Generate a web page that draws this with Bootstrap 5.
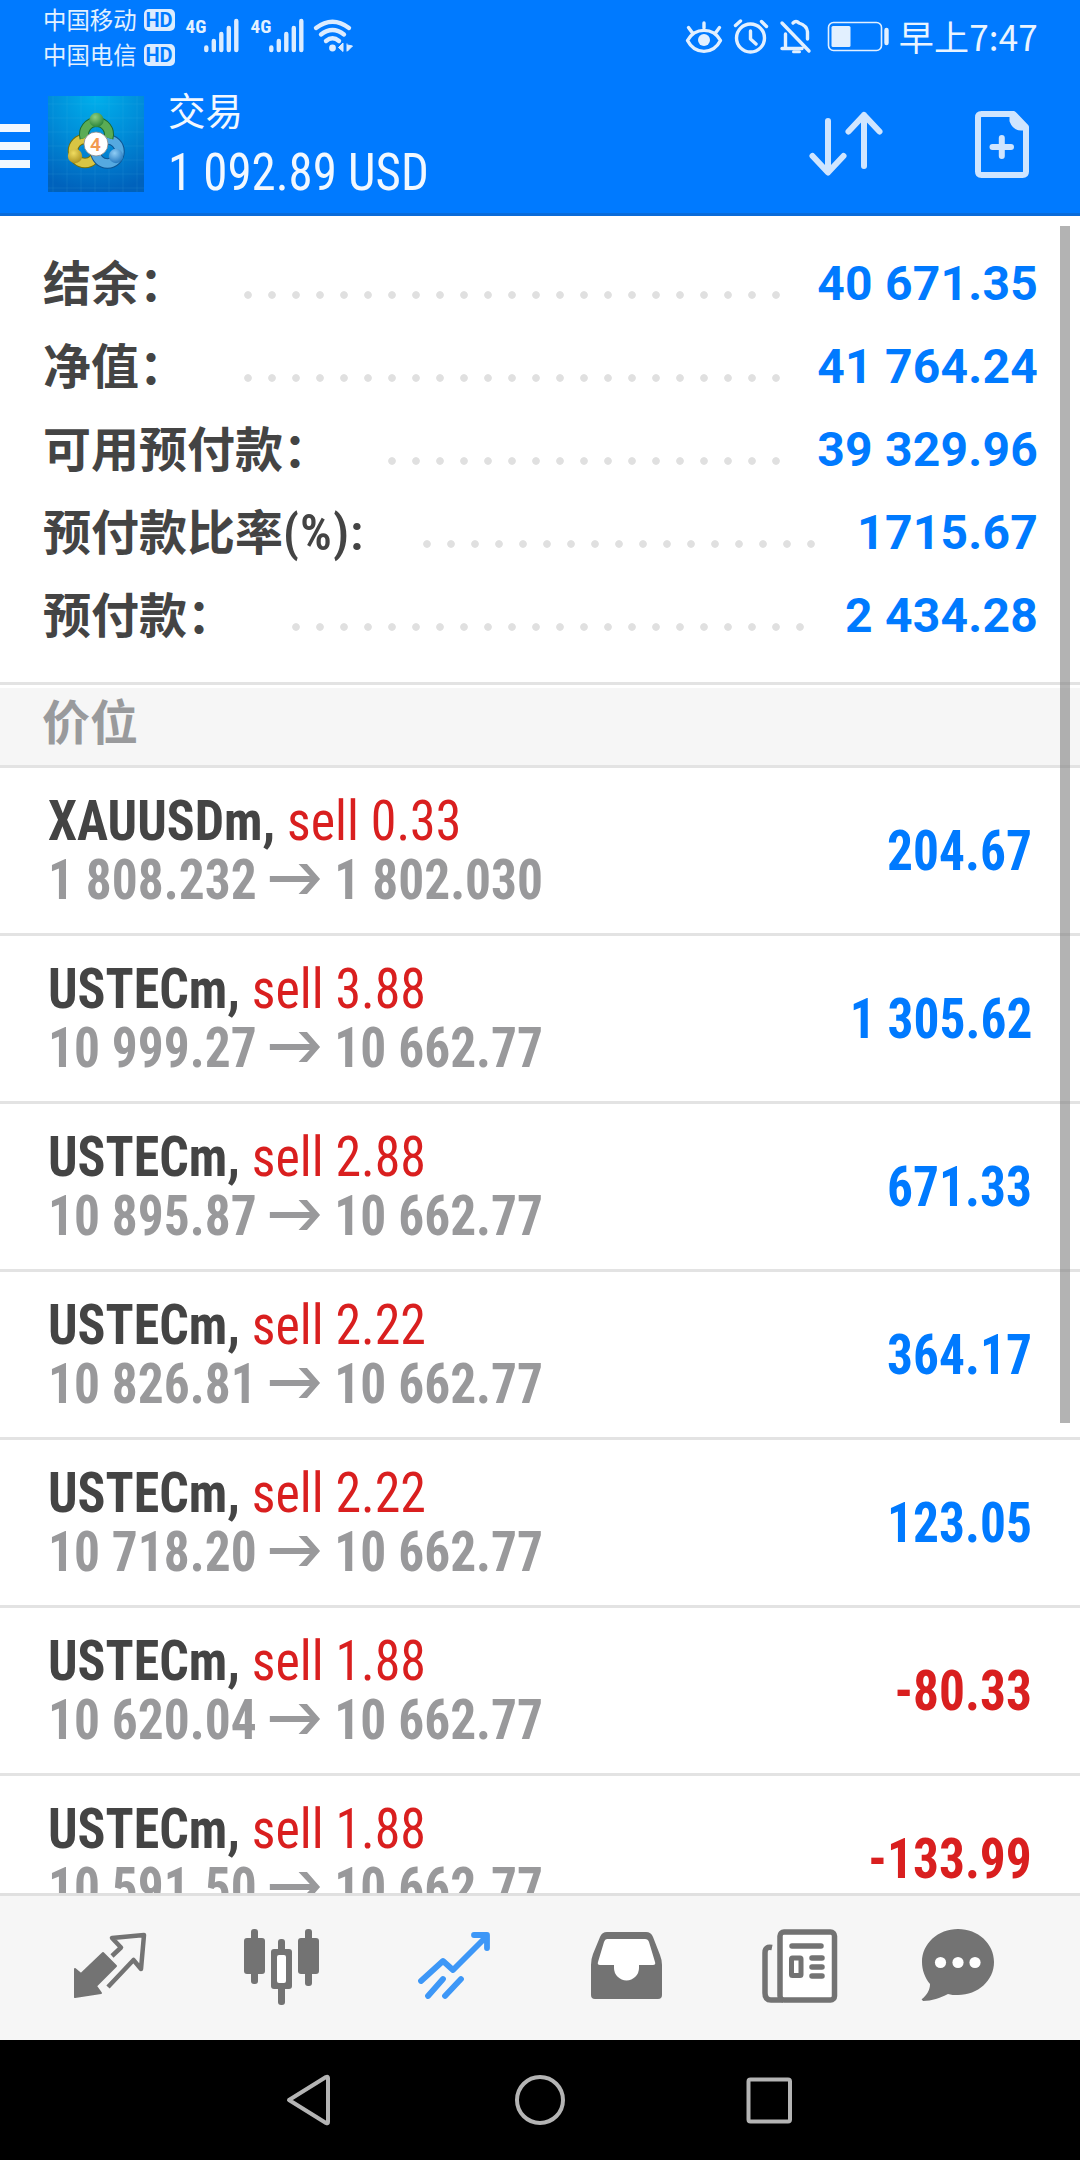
<!DOCTYPE html>
<html lang="zh-CN">
<head>
<meta charset="utf-8">
<meta name="viewport" content="width=device-width, initial-scale=1">
<title>交易</title>
<link href="https://cdn.jsdelivr.net/npm/bootstrap@5.3.0/dist/css/bootstrap.min.css" rel="stylesheet">
<style>
body{width:1080px;height:2160px;overflow:hidden;background:#fff;font-family:Roboto,"Noto Sans CJK SC",sans-serif;color:#444}
svg{display:block;flex:none}
.app-head{height:216px;background:#007aff;border-bottom:3px solid #0a6bd9;color:#f2f8ff}
.status{height:72px;padding-left:43px;padding-right:42px}
.carrier{font:23.4px/35px "Noto Sans CJK SC",sans-serif;color:#e3f1ff;padding-top:2px}
.hd{width:31px;height:22px;border-radius:5px;background:#dcecff;color:#007aff;font:bold 20px/22px Roboto,sans-serif;margin-left:7px}
.net{font:bold 19px/20px "Roboto Condensed",Roboto,sans-serif;color:#e3f1ff;width:18px;margin-top:17px}
.clock{font:35px/44px "Noto Sans CJK SC",sans-serif;margin-left:9px;padding-top:14px;height:66px;color:#eaf4ff;white-space:nowrap;letter-spacing:.2px}
.titlebar{height:141px}
.ttl{font:37.5px/48px "Noto Sans CJK SC",sans-serif}
.total{font:52px/60px "Roboto Condensed",Roboto,sans-serif;margin-top:10px;transform:scaleX(.94);transform-origin:0 0;white-space:nowrap}
.summary{padding:26px 42px 25px 43px;height:466px}
.sumrow{height:83px}
.sumrow .lbl{font:bold 48px/77px "Noto Sans CJK SC",sans-serif;height:83px;white-space:nowrap}
.sumrow .pct{font:bold 50px/77px "Roboto Condensed",Roboto,sans-serif;letter-spacing:1px;font-weight:600}
.sumrow .val{font-size:48px;line-height:83px;letter-spacing:.25px;font-weight:700;color:#007aff;text-align:right;white-space:nowrap}
.w-long{width:250px}.w-mid{width:226px}.w-short{width:215px}
.dots{height:24px;margin-top:41px;background:radial-gradient(circle at 12px 12px,#e0e0e0 3.4px,transparent 4.2px) 0 0/24px 24px repeat-x}
.sect{height:86px;border-top:3px solid #e3e3e3;border-bottom:3px solid #e3e3e3;background:#f6f6f6;box-shadow:inset 0 3px #fff;padding-left:42px;font:bold 48px/69px "Noto Sans CJK SC",sans-serif;color:#999a9c}
.trades{height:1125px;overflow:hidden}
.trade{height:168px;border-bottom:3px solid #e3e3e3;padding:24px 48px 0 48px}
.ln{font:55px/59px "Roboto Condensed",Roboto,sans-serif;white-space:nowrap;transform:scaleX(.943);transform-origin:0 0}
.ln b{font-weight:700}
.sell,.loss{color:#d91f1f}
.gray{color:#99999b;font-weight:700;transform:scaleX(.935)}
.arr{display:inline-block;vertical-align:5px;width:55px;height:30px;margin:0 14px 0 14px}
.pl{font:bold 55px/59px "Roboto Condensed",Roboto,sans-serif;height:59px;margin-top:30px;transform:scaleX(.935);transform-origin:100% 0;white-space:nowrap}
.gain{color:#007aff}
.tabs{height:147px;border-top:3px solid #e0e0e0;background:#f6f6f6;color:#737373}
.sysnav{height:120px;background:#000}
.thumb{position:absolute;left:1060px;top:226px;width:10px;height:1197px;background:rgba(128,128,128,.6)}
</style>
<script src="https://cdn.jsdelivr.net/npm/bootstrap@5.3.0/dist/js/bootstrap.bundle.min.js"></script>
</head>
<body class="d-flex flex-column position-relative">
<header class="app-head">
  <div class="status d-flex">
    <div class="carrier">
      <div class="d-flex align-items-center">中国移动<span class="hd d-flex justify-content-center">HD</span></div>
      <div class="d-flex align-items-center">中国电信<span class="hd d-flex justify-content-center">HD</span></div>
    </div>
    <div class="d-flex ms-2">
      <span class="net" style="margin-left:3px">4G</span>
      <svg width="35" height="72" stroke="#dcecff" stroke-width="4.400" stroke-linecap="round"><path d="M2.300 47.500v2.500M9.800 41v9M17.300 34v16M24.800 28v22M32.300 21v29"/></svg>
      <span class="net" style="margin-left:12px">4G</span>
      <svg width="35" height="72" stroke="#dcecff" stroke-width="4.400" stroke-linecap="round"><path d="M2.300 47.500v2.500M9.800 41v9M17.300 34v16M24.800 28v22M32.300 21v29"/></svg>
      <svg class="ms-2" width="42" height="72" fill="none" stroke="#dcecff" stroke-width="4.400" stroke-linecap="round"><path d="M4 28Q20.500 15.500 37 28M9 34.500Q20.500 25.500 32 34.500M14 41Q20.500 35.500 27 41"/><circle cx="20.500" cy="48" r="3.400" fill="#dcecff" stroke="none"/><path d="M31 43v8.500L26.500 47.500zM35 43.500v8M35.500 45l5 1-5 5z" fill="#dcecff" stroke-width="1" stroke-linecap="butt"/></svg>
    </div>
    <div class="d-flex ms-auto align-items-start">
      <svg width="215" height="72" fill="none" stroke="#e2f0ff" stroke-width="3.400" stroke-linecap="round" stroke-linejoin="round">
        <path d="M12.500 40.500C20 27 38 27 45.500 40.500 38 55 20 55 12.500 40.500zM29 23v5M13.500 27.500l4 5.500M44.500 27.500l-4 5.500"/><circle cx="29" cy="40" r="6" fill="#e2f0ff" stroke="none"/>
        <circle cx="75.500" cy="38" r="14"/><path d="M75.500 31v8l5.500 5M60.500 25.500l5-4.500M91.500 26.500l-5-5"/>
        <path d="M107 23l27 28M107 48.500h20M110.500 48v-14M118 23q3-3 6 0 8 2.500 8.500 9v7"/><path d="M118.500 51.800h6" stroke-width="3"/>
        <rect x="153.500" y="22.500" width="53" height="28" rx="5" stroke-width="1.600"/><rect x="156.500" y="26" width="19" height="21" rx="1.500" fill="#e2f0ff" stroke="none"/><path d="M211.500 30v13" stroke-width="4.400"/>
      </svg>
      <div class="clock">早上7:47</div>
    </div>
  </div>
  <div class="titlebar d-flex">
    <svg width="30" height="144" fill="#f2f8ff"><path d="M0 52h30v8H0zM0 70h30v8H0zM0 88h30v8H0z"/></svg>
    <svg style="margin:24px 0 0 18px" width="96" height="96" viewBox="0 0 96 96">
      <defs>
        <radialGradient id="bg" cx=".5" cy="0" r="1"><stop offset="0" stop-color="#00b0ec"/><stop offset=".5" stop-color="#008cd8"/><stop offset="1" stop-color="#0062bc"/></radialGradient>
        <radialGradient id="gn" cx=".4" cy=".3" r=".8"><stop offset="0" stop-color="#8fce80"/><stop offset="1" stop-color="#1d7b32"/></radialGradient>
        <radialGradient id="yl" cx=".4" cy=".3" r=".8"><stop offset="0" stop-color="#f0dc60"/><stop offset="1" stop-color="#a58a18"/></radialGradient>
        <radialGradient id="bl" cx=".4" cy=".3" r=".8"><stop offset="0" stop-color="#8fcdf5"/><stop offset="1" stop-color="#176eb8"/></radialGradient>
      </defs>
      <path fill="url(#bg)" d="M0 0h96v96H0z"/>
      <path stroke="#5cc6ee" stroke-opacity=".16" stroke-width=".7" d="M5 0v96M19 0v96M33 0v96M47 0v96M61 0v96M75 0v96M89 0v96M0 8h96M0 22h96M0 36h96M0 50h96M0 64h96M0 78h96M0 92h96"/>
      <g fill="none">
        <circle cx="37" cy="55" r="12" stroke="#73700a" stroke-width="10.500"/><circle cx="37" cy="55" r="12" stroke="#d8c544" stroke-width="8.500"/>
        <circle cx="59.500" cy="55.500" r="12" stroke="#0d5593" stroke-width="10.500"/><circle cx="59.500" cy="55.500" r="12" stroke="#55a9e0" stroke-width="8.500"/>
        <path d="M36.500 42A12.500 12.500 0 1 1 60.500 42" stroke="#1b6b33" stroke-width="10"/><path d="M36.500 42A12.500 12.500 0 1 1 60.500 42" stroke="#5aac55" stroke-width="8"/>
      </g>
      <circle cx="48.500" cy="24" r="7.200" fill="url(#gn)"/><circle cx="27" cy="60" r="7.200" fill="url(#yl)"/><circle cx="68" cy="60" r="7.200" fill="url(#bl)"/>
      <circle cx="48" cy="48" r="12" fill="#fff" stroke="#888" stroke-width=".8"/>
      <text x="47.500" y="55" text-anchor="middle" font-family="Roboto" font-weight="600" font-size="19" fill="#f29a50">4</text>
    </svg>
    <div style="margin-left:24px;padding-top:13px">
      <div class="ttl">交易</div>
      <div class="total">1 092.89 USD</div>
    </div>
    <svg class="ms-auto" width="280" height="144" fill="none" stroke="#cfe5ff" stroke-width="6" stroke-linecap="round" stroke-linejoin="round">
      <path d="M28 49v51M12.500 84L28 100.500 43.500 84M64 94V43M48.500 59.500L64 43 79.500 59.500"/>
      <path d="M181.500 42h32l12.500 13v44.500q0 3.500-3.500 3.500h-41q-3.500 0-3.500-3.500v-54q0-3.500 3.500-3.500z"/><path d="M211 43v6q3 8 10 8h5v-2L215 43z" fill="#cfe5ff" stroke-width="3"/><path d="M192.500 75h18.500M201.800 66v18"/>
    </svg>
  </div>
</header>

<section class="summary">
  <div class="sumrow d-flex"><span class="lbl">结余：</span><i class="dots ms-auto" style="width:552px"></i><span class="val w-long">40 671.35</span></div>
  <div class="sumrow d-flex"><span class="lbl">净值：</span><i class="dots ms-auto" style="width:552px"></i><span class="val w-long">41 764.24</span></div>
  <div class="sumrow d-flex"><span class="lbl">可用预付款：</span><i class="dots ms-auto" style="width:408px"></i><span class="val w-long">39 329.96</span></div>
  <div class="sumrow d-flex"><span class="lbl">预付款比率<span class="pct">(%):</span></span><i class="dots ms-auto" style="width:408px"></i><span class="val w-short">1715.67</span></div>
  <div class="sumrow d-flex"><span class="lbl">预付款：</span><i class="dots ms-auto" style="width:528px"></i><span class="val w-mid">2 434.28</span></div>
</section>
<div class="sect">价位</div>
<main class="trades">
  <div class="trade d-flex justify-content-between"><div><div class="ln"><b>XAUUSDm,</b> <span class="sell">sell 0.33</span></div><div class="ln gray">1 808.232<svg class="arr" viewBox="0 0 55 30"><path fill="currentColor" d="M0 12h43L31 0h9L54 15 40 30h-9L43 18H0z"/></svg>1 802.030</div></div><div class="pl gain">204.67</div></div>
  <div class="trade d-flex justify-content-between"><div><div class="ln"><b>USTECm,</b> <span class="sell">sell 3.88</span></div><div class="ln gray">10 999.27<svg class="arr" viewBox="0 0 55 30"><path fill="currentColor" d="M0 12h43L31 0h9L54 15 40 30h-9L43 18H0z"/></svg>10 662.77</div></div><div class="pl gain">1 305.62</div></div>
  <div class="trade d-flex justify-content-between"><div><div class="ln"><b>USTECm,</b> <span class="sell">sell 2.88</span></div><div class="ln gray">10 895.87<svg class="arr" viewBox="0 0 55 30"><path fill="currentColor" d="M0 12h43L31 0h9L54 15 40 30h-9L43 18H0z"/></svg>10 662.77</div></div><div class="pl gain">671.33</div></div>
  <div class="trade d-flex justify-content-between"><div><div class="ln"><b>USTECm,</b> <span class="sell">sell 2.22</span></div><div class="ln gray">10 826.81<svg class="arr" viewBox="0 0 55 30"><path fill="currentColor" d="M0 12h43L31 0h9L54 15 40 30h-9L43 18H0z"/></svg>10 662.77</div></div><div class="pl gain">364.17</div></div>
  <div class="trade d-flex justify-content-between"><div><div class="ln"><b>USTECm,</b> <span class="sell">sell 2.22</span></div><div class="ln gray">10 718.20<svg class="arr" viewBox="0 0 55 30"><path fill="currentColor" d="M0 12h43L31 0h9L54 15 40 30h-9L43 18H0z"/></svg>10 662.77</div></div><div class="pl gain">123.05</div></div>
  <div class="trade d-flex justify-content-between"><div><div class="ln"><b>USTECm,</b> <span class="sell">sell 1.88</span></div><div class="ln gray">10 620.04<svg class="arr" viewBox="0 0 55 30"><path fill="currentColor" d="M0 12h43L31 0h9L54 15 40 30h-9L43 18H0z"/></svg>10 662.77</div></div><div class="pl loss">-80.33</div></div>
  <div class="trade d-flex justify-content-between"><div><div class="ln"><b>USTECm,</b> <span class="sell">sell 1.88</span></div><div class="ln gray">10 591.50<svg class="arr" viewBox="0 0 55 30"><path fill="currentColor" d="M0 12h43L31 0h9L54 15 40 30h-9L43 18H0z"/></svg>10 662.77</div></div><div class="pl loss">-133.99</div></div>
</main>
<nav class="tabs d-flex">
  <svg style="margin:33px 0 0 72px" width="78" height="74"><path fill="#737373" stroke="#737373" stroke-width="2" stroke-linejoin="round" d="M3 40l6 5 22-21 13 13-20 20 5 7-26 4z"/><path fill="#fff" stroke="#737373" stroke-width="4.500" stroke-linejoin="round" d="M40 27l9-8.500-9-9.500 32-3-3 34-7.500-9L36 58" fill-opacity="0"/></svg>
  <svg style="margin:33px 0 0 94px" width="76" height="78" fill="#737373"><rect width="21" height="36" y="9" rx="3"/><rect x="7" width="7" height="55" rx="3"/><rect x="27" y="20" width="21" height="40" rx="3"/><rect x="34" y="10" width="7" height="66" rx="3"/><rect x="33" y="26" width="9" height="28" rx="2" fill="#fff"/><rect x="54" y="9" width="21" height="36" rx="3"/><rect x="61" width="7" height="57" rx="3"/></svg>
  <svg style="margin:33px 0 0 96px" width="76" height="74" fill="none" stroke="#3d97f7" stroke-width="5.800" stroke-linecap="round" stroke-linejoin="round"><path d="M5 52l22-20 10 9 33-33M58 6h13v13M12 67l15-17M29 67l16-17"/></svg>
  <svg style="margin:36px 0 0 98px" width="74" height="68"><path fill="#737373" d="M17 0h39q5 0 7 5l7 18q2 5 2 10v30q0 4-4 4H5q-4 0-4-4V33q0-6 2-11L10 5q2-5 7-5z"/><path fill="#fff" d="M17 7h38q3 0 4 3l6 20q1 3-2 3H49v3a12.500 12.500 0 0 1-25 0v-3H10q-3 0-2-3l6-20q1-3 3-3z"/></svg>
  <svg style="margin:33px 0 0 98px" width="76" height="74" fill="none" stroke="#737373" stroke-width="5.500"><rect x="18" y="3" width="54.500" height="68" rx="4" fill="#fff"/><path d="M10 18.500Q3 17 3 24v40q0 7 6 7h12"/><g stroke-linecap="round"><path d="M30 17h29M50 29h10M50 38h10M50 47h10" /></g><rect x="29.500" y="29" width="9.500" height="17.500" rx="1" stroke-width="5"/></svg>
  <svg style="margin:33px 0 0 83px" width="74" height="74"><path fill="#737373" d="M37 0c20 0 36 14.500 36 33S57 66 37 66c-4 0-7 0-10-1-8 4-16 7-25 7 0-1-2-1-1-2 5-4 8-9 8-15C4 49 1 41 1 33 1 14.500 17 0 37 0z"/><circle cx="19.500" cy="33.500" r="5.600" fill="#fff"/><circle cx="37" cy="33.500" r="5.600" fill="#fff"/><circle cx="54" cy="33.500" r="5.600" fill="#fff"/></svg>
</nav>
<nav class="sysnav">
  <svg width="1080" height="120" fill="none" stroke="#b4b4b4" stroke-width="4" stroke-linejoin="round"><path d="M289 60l37-23q2-1 2 1v44q0 2-2 1z"/><circle cx="540" cy="60" r="23"/><rect x="748.500" y="39.500" width="41.500" height="42" rx="2"/></svg>
</nav>
<div class="thumb"></div>
</body>
</html>
